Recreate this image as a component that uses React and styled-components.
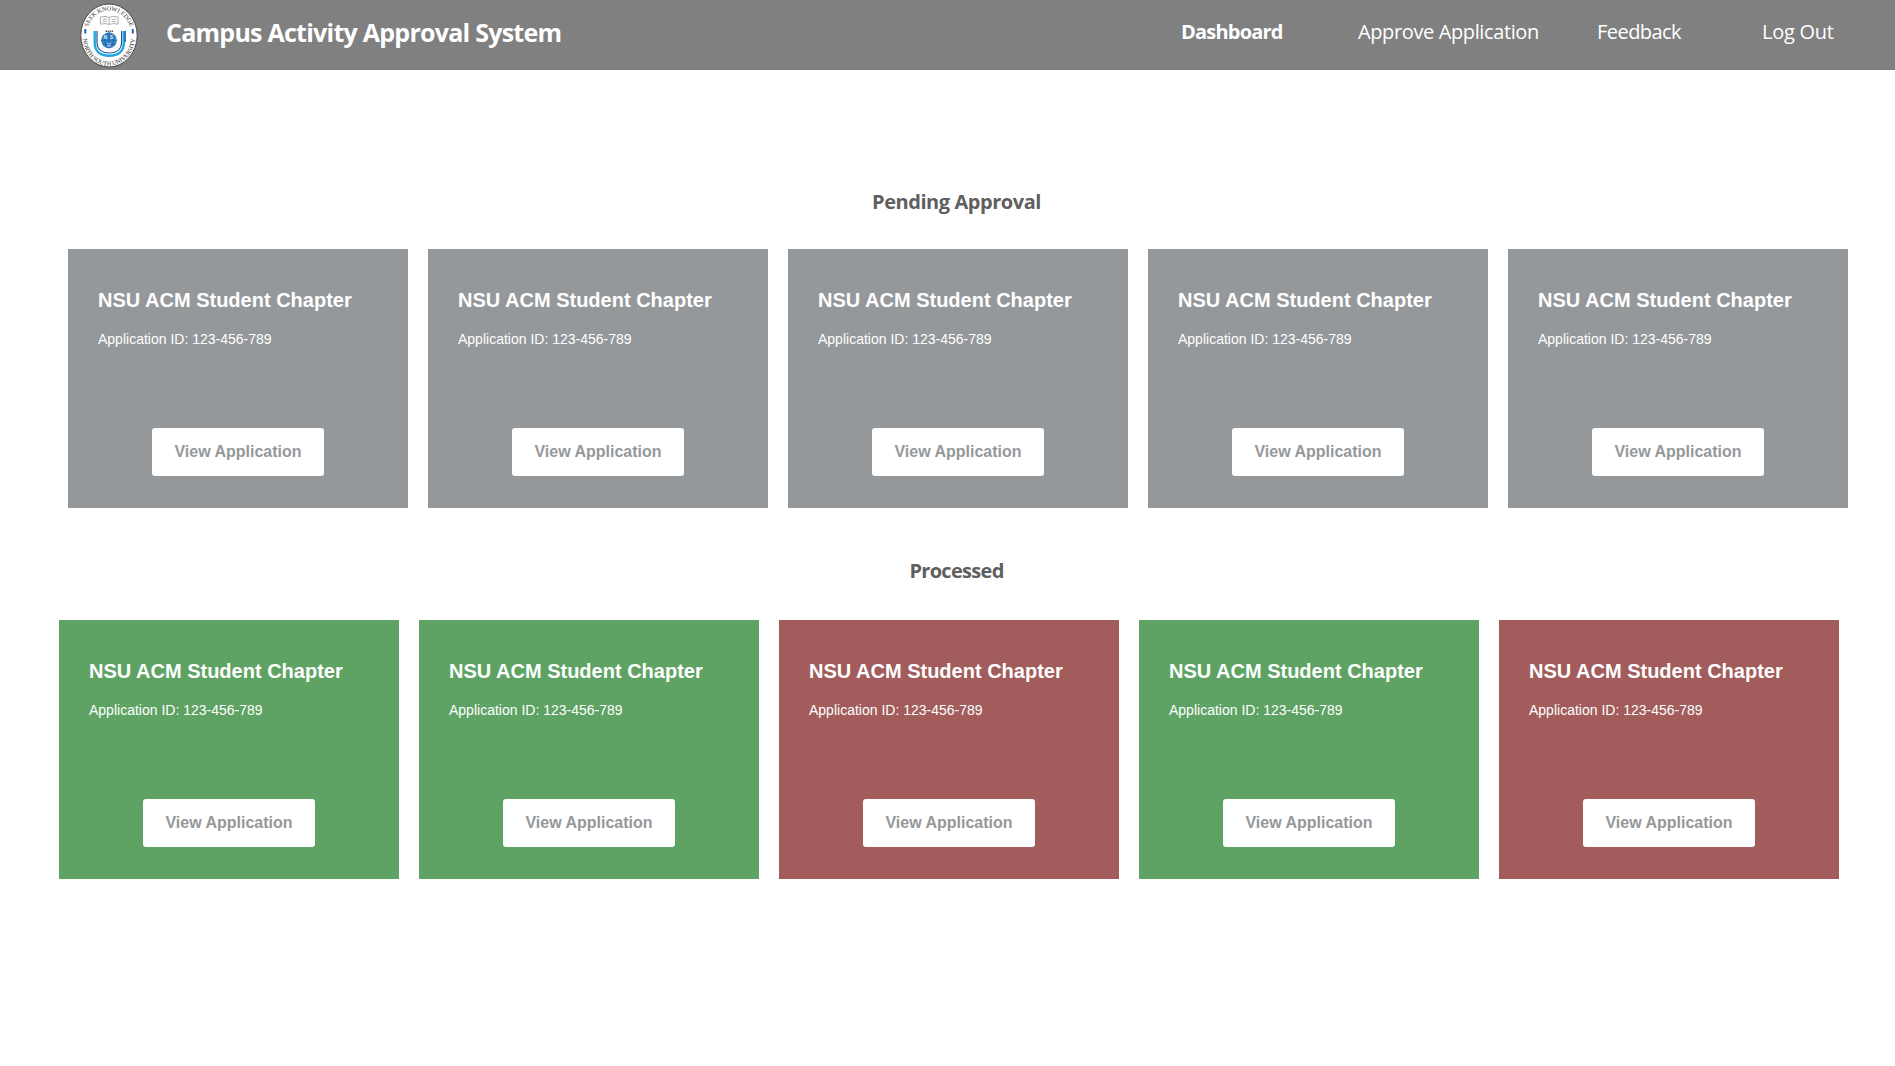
import React from 'react';
import styled, { createGlobalStyle } from 'styled-components';

const GlobalStyle = createGlobalStyle`
  * { box-sizing: border-box; }
  body { margin: 0; background: #fff; font-family: "Liberation Sans", Arial, sans-serif; }
  h1, h2, h3, p { margin: 0; }
`;

const Page = styled.div`
  width: 1895px;
  min-height: 1066px;
  overflow: hidden;
`;

const Header = styled.header`
  display: flex;
  align-items: flex-start;
  height: 70px;
  padding: 3px 62px 0 80px;
  background: #808080;
  color: #fff;
  font-family: "Open Sans", "Noto Sans", sans-serif;
`;

const Logo = styled.svg`
  display: block;
  width: 59px;
  height: 65px;
  flex: none;
`;

const Brand = styled.h1`
  margin: 11px auto 0 27px;
  font-size: 25px;
  line-height: 36px;
  font-weight: 700;
  letter-spacing: -0.75px;
  white-space: nowrap;
`;

const Nav = styled.nav`
  display: flex;
  margin-top: 14px;
`;

const NavLink = styled.a`
  width: ${(p) => p.$width}px;
  margin-left: ${(p) => p.$gap || 0}px;
  font-size: 20px;
  line-height: 30px;
  font-weight: ${(p) => (p.$active ? 700 : 400)};
  letter-spacing: ${(p) => p.$track || 0}px;
  color: #fff;
  white-space: nowrap;
`;

const Main = styled.main`
  padding-top: 114px;
`;

const SectionTitle = styled.h2`
  width: 1895px;
  padding-left: 18px;
  text-align: center;
  font-family: "Open Sans", "Noto Sans", sans-serif;
  font-size: 20px;
  line-height: 36px;
  font-weight: 700;
  letter-spacing: ${(p) => p.$track || 0}px;
  color: #5f5f5f;
`;

const CardRow = styled.section`
  display: flex;
  gap: 20px;
  margin: ${(p) => p.$margin};
`;

const tones = { pending: '#95989a', approved: '#5ea363', rejected: '#a25c5c' };

const Card = styled.article`
  display: flex;
  flex-direction: column;
  width: 340px;
  height: 259px;
  padding: 39px 30px 32px;
  background: ${(p) => tones[p.$tone]};
  color: #fff;
`;

const CardTitle = styled.h3`
  font-size: 20px;
  line-height: 24px;
  white-space: nowrap;
`;

const CardId = styled.p`
  margin-top: 17px;
  font-size: 14px;
  line-height: 20px;
  white-space: nowrap;
`;

const ViewButton = styled.button`
  align-self: center;
  margin-top: auto;
  width: 172px;
  height: 48px;
  padding: 0;
  border: 0;
  border-radius: 3px;
  background: #fff;
  color: #95989a;
  font: 700 16px "Liberation Sans", Arial, sans-serif;
`;

function Crest() {
  return (
    <Logo viewBox="0 0 59 65" aria-label="North South University">
      <defs>
        <path id="crestTop" d="M6.500 33 A22.500 25.500 0 0 1 51.500 33" />
        <path id="crestBottom" d="M2.600 33 A26.400 29.600 0 0 0 55.400 33" />
      </defs>
      <ellipse cx="29" cy="32.500" rx="28.200" ry="31.500" fill="#fff" stroke="#3c3c3c" strokeWidth="0.9" />
      <g fill="#2c2c2c" fontFamily="Liberation Serif, serif" fontSize="6.200">
        <text textAnchor="middle"><textPath href="#crestTop" startOffset="50%">SEEK KNOWLEDGE</textPath></text>
        <text textAnchor="middle"><textPath href="#crestBottom" startOffset="50%">NORTH SOUTH UNIVERSITY</textPath></text>
      </g>
      <path d="M5.300 26v4.500M52.800 26v4.500" stroke="#2464ae" strokeWidth="2" />
      <path d="M20.500 14q4.800-1.400 8.700.4 4-1.800 8.800-.4v7.200q-4.800-1.400-8.800.2-3.900-1.600-8.700-.2zM29.200 14.500v6.600M22.700 16.400h4.200M22.700 18.600h4.200M31.700 16.400h4.200M31.700 18.600h4.200" fill="none" stroke="#8a8a8a" strokeWidth="0.700" />
      <path d="M14.700 28v11.500c0 8.500 5.400 13.200 14.600 13.200s14.600-4.700 14.600-13.200V28" fill="none" stroke="#23a7df" strokeWidth="2.400" />
      <path d="M17 28v11c0 7 4.700 11 12.300 11s12.300-4 12.300-11V28M45.200 28v11" fill="none" stroke="#18569d" strokeWidth="1.200" />
      <path d="M25.500 28.300h7.500" stroke="#555" strokeWidth="1.600" strokeDasharray="1.500 .6" />
      <circle cx="29" cy="37.300" r="7.900" fill="#3487c8" />
      <path d="M21.100 37.300h15.800M29 29.500v15.600M22.500 33h13M22.500 41.500h13M29 29.500c-5.500 4-5.500 12 0 15.600M29 29.500c5.500 4 5.500 12 0 15.600" fill="none" stroke="#1b5798" strokeWidth="0.600" />
      <g fill="#e4f2fc" fontFamily="Liberation Sans, sans-serif" fontSize="4.500" fontWeight="700">
        <text x="23.800" y="36">N</text><text x="29.900" y="36">S</text><text x="27.200" y="43.500">U</text>
      </g>
    </Logo>
  );
}

function ApplicationCard({ tone }) {
  return (
    <Card $tone={tone}>
      <CardTitle>NSU ACM Student Chapter</CardTitle>
      <CardId>Application ID: 123-456-789</CardId>
      <ViewButton>View Application</ViewButton>
    </Card>
  );
}

const pending = Array(5).fill('pending');
const processed = ['approved', 'approved', 'rejected', 'approved', 'rejected'];

export default function App() {
  return (
    <Page>
      <GlobalStyle />
      <Header>
        <Crest />
        <Brand>Campus Activity Approval System</Brand>
        <Nav>
          <NavLink $active $width={101} $track={-0.8}>Dashboard</NavLink>
          <NavLink $width={181} $gap={76} $track={-0.38}>Approve Application</NavLink>
          <NavLink $width={83} $gap={58} $track={-0.55}>Feedback</NavLink>
          <NavLink $width={71} $gap={82} $track={-0.25}>Log Out</NavLink>
        </Nav>
      </Header>
      <Main>
        <SectionTitle $track={-0.45}>Pending Approval</SectionTitle>
        <CardRow $margin="29px 0 45px 68px">
          {pending.map((tone, i) => <ApplicationCard key={i} tone={tone} />)}
        </CardRow>
        <SectionTitle $track={-0.7}>Processed</SectionTitle>
        <CardRow $margin="31px 0 0 59px">
          {processed.map((tone, i) => <ApplicationCard key={i} tone={tone} />)}
        </CardRow>
      </Main>
    </Page>
  );
}
